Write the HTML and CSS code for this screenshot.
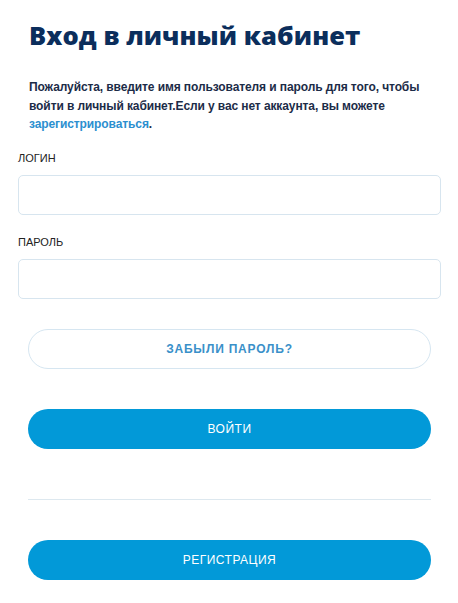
FILE: index.html
```html
<!DOCTYPE html>
<html lang="ru">
<head>
<meta charset="utf-8">
<title>Вход в личный кабинет</title>
<link rel="stylesheet" href="styles.css">
</head>
<body>
<main class="page">
  <h1 class="title">Вход в личный кабинет</h1>
  <p class="intro">Пожалуйста, введите имя пользователя и пароль для того, чтобы войти в личный кабинет.Если у вас нет аккаунта, вы можете <a class="link" href="#">зарегистрироваться</a>.</p>
  <form class="form">
    <label class="field">
      <span class="label">ЛОГИН</span>
      <input class="input" type="text">
    </label>
    <label class="field">
      <span class="label">ПАРОЛЬ</span>
      <input class="input" type="password">
    </label>
    <div class="actions">
      <button type="button" class="btn btn-outline">ЗАБЫЛИ ПАРОЛЬ?</button>
      <button type="submit" class="btn btn-primary btn-login">ВОЙТИ</button>
      <hr class="divider">
      <button type="button" class="btn btn-primary btn-reg">РЕГИСТРАЦИЯ</button>
    </div>
  </form>
</main>
</body>
</html>
```
FILE: styles.css
```css
* { box-sizing: border-box; }
html, body { margin: 0; padding: 0; background: #ffffff; }
body { font-family: "Liberation Sans", Arial, sans-serif; }
.page { padding: 16px 17px 0 18px; width: 458px; }
.title {
  margin: 0 0 0 11px;
  font-family: "Open Sans", "Liberation Sans", sans-serif;
  font-weight: 800;
  font-size: 25.5px;
  line-height: 38px;
  color: #0b2e5c;
  letter-spacing: 0.1px;
}
.intro {
  margin: 24px 0 0 11px;
  font-size: 12px;
  font-weight: 700;
  line-height: 18.5px;
  letter-spacing: -0.1px;
  color: #1c2c48;
}
.link { color: #2b8fcf; text-decoration: none; }
.form { display: flex; flex-direction: column; margin-top: 17px; }
.field { display: flex; flex-direction: column; margin-bottom: 20px; }
.label { font-size: 11px; color: #222; line-height: 14px; margin-bottom: 10px; }
.input {
  height: 40px;
  width: 423px;
  border: 1px solid #d7e5ef;
  border-radius: 5px;
  background: #fff;
  outline: none;
}
.actions { display: flex; flex-direction: column; padding: 10px 0 0 10px; width: 413px; }
.btn {
  height: 40px;
  border-radius: 20px;
  font-family: "Liberation Sans", Arial, sans-serif;
  font-size: 12px;
  letter-spacing: 0.5px;
  cursor: pointer;
}
.btn-outline {
  background: #fff;
  border: 1px solid #d6e6f1;
  color: #3a90c9;
  font-weight: 700;
  letter-spacing: 0.8px;
}
.btn-primary {
  background: #0299d8;
  border: none;
  color: #fff;
}
.btn-login { margin-top: 40px; }
.divider { margin: 50px 0 0 0; border: none; border-top: 1px solid #dde8ef; height: 0; }
.btn-reg { margin-top: 40px; }
```
